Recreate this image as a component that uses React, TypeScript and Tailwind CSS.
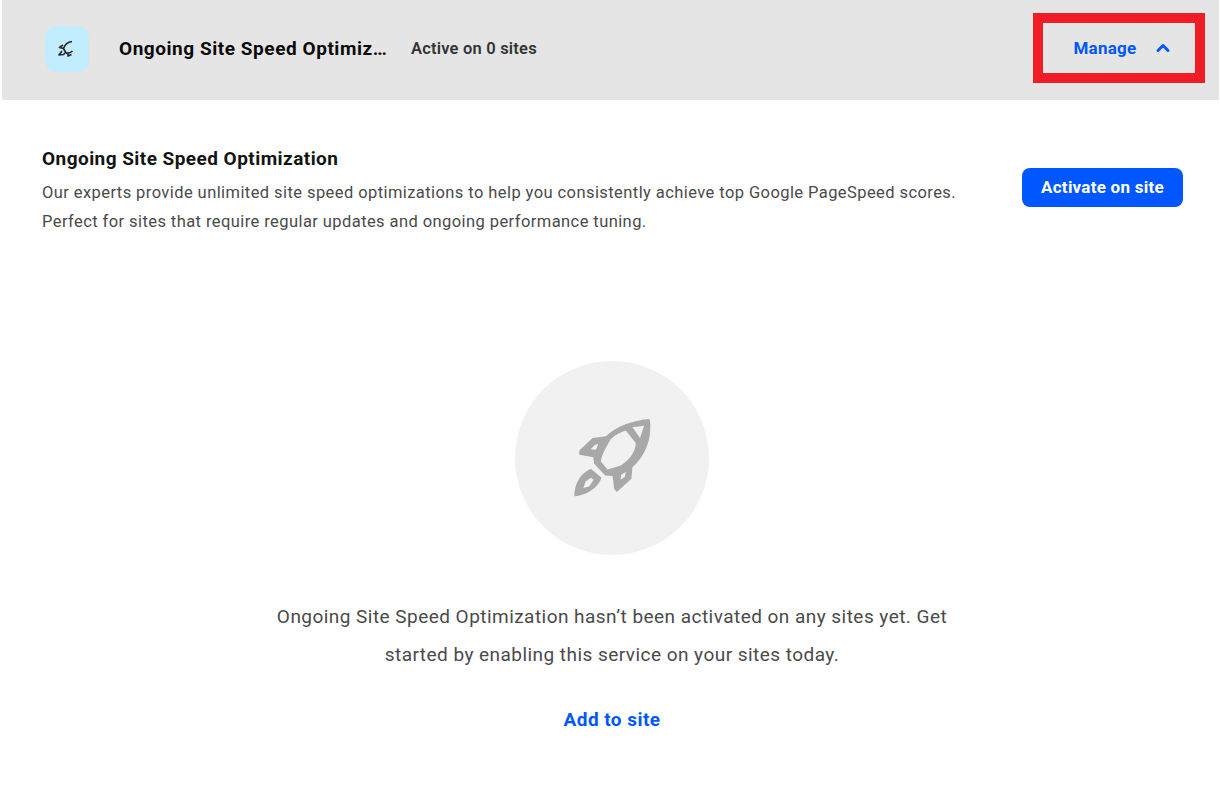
import { ChevronUp } from 'lucide-react';

function RocketIcon() {
  return (
    <svg viewBox="180 184 250 250" className="h-[83px] w-[83px]" fill="#a8a8a8" fillRule="evenodd">
      <path d="M415 190C365 195 320 210 285 242L245 247L205 285L205 298L247 305L250 325L283 360L305 362L310 400L318 410L362 370L365 335C395 310 425 260 418 195ZM365 215L400 210L388 247ZM345 225L375 262C375 285 360 310 330 330L290 342L270 318C272 300 282 280 300 250C314 238 330 230 345 225ZM252 268L262 265L255 283L239 281ZM345 350L342 365L329 373L332 357Z" />
      <path d="M240 340L272 367C260 400 225 420 190 423C190 390 205 355 240 340ZM240 367L248 373L235 393L217 398L224 378Z" />
    </svg>
  );
}

function SmallRocket() {
  return (
    <svg viewBox="0 0 18 18" className="h-[18px] w-[18px]" fill="none" stroke="#2b2b2b" strokeWidth="1.7" strokeLinejoin="round">
      <path d="M14 1.500C10 2 7 4 5.500 8.500L8 13C10.500 13.500 13 12.500 14.500 11" />
      <path d="M5 5L1.500 7.500L5.500 8.500" />
      <path d="M4 11L1 15L5.500 14.500L7 13" />
      <path d="M10 13.500L10 16L13.500 14.500" />
    </svg>
  );
}

export default function App() {
  return (
    <div className="min-h-[785px] bg-white font-['Roboto',sans-serif]">
      <div className="ml-[2px] mr-px flex h-[100px] items-center bg-[#e5e5e5] pl-[43px] pr-[14px]">
        <div className="mb-[2px] flex h-[46px] w-[44px] items-center justify-center rounded-[12px] bg-[#c2ecff]">
          <SmallRocket />
        </div>
        <div className="mb-[2px] ml-[30px] w-[271px] truncate text-[19px] font-bold tracking-[0.55px] text-[#0a0a0a]">
          Ongoing Site Speed Optimization
        </div>
        <div className="mb-[2px] ml-[21px] text-[16.5px] font-semibold tracking-[0.2px] text-[#333333]">
          Active on 0 sites
        </div>
        <button className="mb-[4px] ml-auto flex h-[70px] w-[172px] items-center justify-center gap-[16px] border-[10px] border-[#f01c26] pl-[8px] text-[17px] font-bold tracking-[0.25px] text-[#0057ff]">
          <span className="mt-[2px]">Manage</span>
          <ChevronUp className="h-[20px] w-[20px]" strokeWidth={3.5} />
        </button>
      </div>

      <div className="flex items-start justify-between pl-[42px] pr-[37px] pt-[46px]">
        <div>
          <h3 className="text-[19px] leading-[26px] font-bold tracking-[0.45px] text-[#141414]">Ongoing Site Speed Optimization</h3>
          <p className="mt-[6px] text-[16.5px] leading-[29px] tracking-[0.42px] text-[#4a4a4a]">
            Our experts provide unlimited site speed optimizations to help you consistently achieve top Google PageSpeed scores.
            <br />
            Perfect for sites that require regular updates and ongoing performance tuning.
          </p>
        </div>
        <button className="mt-[22px] h-[39px] w-[161px] rounded-[8px] bg-[#0057ff] text-[17px] font-bold tracking-[0.25px] text-white">
          Activate on site
        </button>
      </div>

      <div className="mt-[125px] flex flex-col items-center pl-[4px]">
        <div className="flex h-[194px] w-[194px] items-center justify-center rounded-full bg-[#f1f1f1]">
          <RocketIcon />
        </div>
        <p className="mt-[43px] w-[700px] text-center text-[19px] leading-[38px] tracking-[0.46px] text-[#4a4a4a]">
          Ongoing Site Speed Optimization hasn’t been activated on any sites yet. Get
          <br />
          started by enabling this service on your sites today.
        </p>
        <button className="mt-[34px] text-[19px] leading-[24px] font-bold tracking-[0.45px] text-[#0057ff]">Add to site</button>
      </div>
    </div>
  );
}
